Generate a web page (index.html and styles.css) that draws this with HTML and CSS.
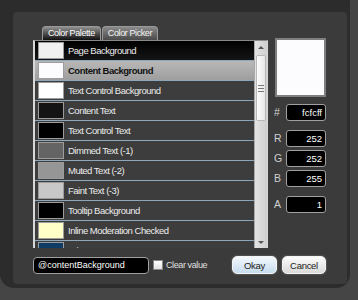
FILE: index.html
```html
<!DOCTYPE html>
<html lang="en">
<head>
    <meta charset="UTF-8">
    <title>Color Picker</title>
    <link rel="stylesheet" href="styles.css">
</head>
<body>

    <div class="frame">
        <div class="dialog">
            <div class="main">
                <!-- palette list -->
                <div class="palette">
                    <div class="tabs">
                        <span class="tab active">Color Palette</span>
                        <span class="tab">Color Picker</span>
                    </div>
                    <div class="listbox">
                        <ul class="colors">
                            <li class="dark"><span class="swatch" style="background: #f0f0f0;"></span>Page Background</li>
                            <li class="selected"><span class="swatch" style="background: #fcfcff;"></span>Content Background</li>
                            <li><span class="swatch" style="background: #ffffff;"></span>Text Control Background</li>
                            <li><span class="swatch" style="background: #141414;"></span>Content Text</li>
                            <li><span class="swatch" style="background: #000000;"></span>Text Control Text</li>
                            <li><span class="swatch" style="background: #646464;"></span>Dimmed Text (-1)</li>
                            <li><span class="swatch" style="background: #969696;"></span>Muted Text (-2)</li>
                            <li><span class="swatch" style="background: #c8c8c8;"></span>Faint Text (-3)</li>
                            <li><span class="swatch" style="background: #000000;"></span>Tooltip Background</li>
                            <li><span class="swatch" style="background: #ffffc8;"></span>Inline Moderation Checked</li>
                            <li><span class="swatch" style="background: #0f3c64;"></span>Primary Content</li>
                        </ul>
                        <div class="scrollbar">
                            <span class="arrow up"></span>
                            <span class="thumb"><i></i><i></i><i></i></span>
                            <span class="arrow down"></span>
                        </div>
                    </div>
                </div>

                <!-- picker values -->
                <div class="picker">
                    <div class="preview"></div>
                    <div class="field hex"><label>#</label><span class="box">fcfcff</span></div>
                    <div class="field"><label>R</label><span class="box">252</span></div>
                    <div class="field"><label>G</label><span class="box">252</span></div>
                    <div class="field last"><label>B</label><span class="box">255</span></div>
                    <div class="field"><label>A</label><span class="box">1</span></div>
                </div>
            </div>

            <div class="actions">
                <input type="text" class="varname" value="@contentBackground">
                <label class="clear"><span class="check"></span>Clear value</label>
                <button type="button" class="button okay">Okay</button>
                <button type="button" class="button cancel">Cancel</button>
            </div>
        </div>
    </div>

</body>
</html>
```

FILE: styles.css
```css
body {
    margin: 0;
    width: 358px;
    height: 300px;
    overflow: hidden;
    background: #454545;
    font-family: "Liberation Sans", Arial, sans-serif;
    font-size: 9px;
}

.frame {
    width: 350px;
    height: 288px;
    padding: 12px 0 0 13px;
    box-sizing: border-box;
    background: #2c2c2c;
    border-radius: 0 0 14px 14px;
}

.dialog {
    width: 334px;
    height: 272px;
    padding: 14px 21px 0 20px;
    box-sizing: border-box;
    background: #3b3b3b;
    border-radius: 4px;
}

.main {
    display: flex;
    gap: 6px;
}

.palette {
    width: 235px;
}

/* tabs */
.tabs {
    display: flex;
    gap: 1px;
    padding-left: 9px;
    height: 14px;
}

.tab {
    height: 14px;
    padding: 0 5px;
    box-sizing: border-box;
    border: 1px solid #9a9a9a;
    border-bottom: none;
    border-radius: 4px 4px 0 0;
    background: linear-gradient(#8a8a8a, #4a4a4a);
    color: #f4f4f4;
    letter-spacing: -0.4px;
    line-height: 13px;
}

.tab.active {
    background: linear-gradient(#909090, #101010);
    color: #fff;
}

/* list */
.listbox {
    display: flex;
    height: 208px;
    border-top: 1px solid #8a8a8a;
    border-left: 2px solid #d8d8d8;
    border-right: 1px solid #d8d8d8;
    box-sizing: border-box;
    overflow: hidden;
}

.colors {
    flex: 1;
    list-style: none;
    margin: 0;
    padding: 0;
}

.colors li {
    display: flex;
    align-items: center;
    height: 19px;
    border-bottom: 1px solid #8ea6ba;
    background: #3d3d3d;
    color: #ececec;
    font-size: 9.5px;
    letter-spacing: -0.5px;
    white-space: nowrap;
}

.colors li.dark {
    background: linear-gradient(#000, #151515);
}

.colors li.selected {
    background: linear-gradient(#b8b8b8, #9e9e9e);
    color: #111;
    font-weight: bold;
}

.swatch {
    width: 26px;
    height: 17px;
    margin: 0 4px 0 3px;
    box-sizing: border-box;
    border: 1px solid #9c9c9c;
    flex-shrink: 0;
}

.scrollbar {
    display: flex;
    flex-direction: column;
    align-items: center;
    width: 12px;
    border-left: 1px solid #a8a8a8;
    background: linear-gradient(to right, #e4e4e4, #cfcfcf);
}

.arrow {
    width: 0;
    height: 0;
    border-left: 3px solid transparent;
    border-right: 3px solid transparent;
}

.arrow.up {
    margin-top: 5px;
    border-bottom: 3px solid #555;
}

.arrow.down {
    margin-top: auto;
    margin-bottom: 4px;
    border-top: 3px solid #555;
}

.thumb {
    display: flex;
    flex-direction: column;
    justify-content: center;
    align-items: center;
    gap: 2px;
    width: 10px;
    height: 66px;
    margin-top: 6px;
    box-sizing: border-box;
    border: 1px solid #b8b8b8;
    border-radius: 2px;
    background: linear-gradient(to right, #fdfdfd, #e6e6e6);
}

.thumb i {
    width: 6px;
    height: 1px;
    background: #777;
}

/* picker */
.picker {
    display: flex;
    flex-direction: column;
    width: 52px;
}

.preview {
    width: 51px;
    height: 59px;
    margin: 12px 0 7px 1px;
    box-sizing: border-box;
    border: 2px solid #7f7f7f;
    background: #fcfcff;
}

.field {
    display: flex;
    justify-content: space-between;
    height: 17px;
    margin-bottom: 3px;
}

.field.hex,
.field.last {
    margin-bottom: 9px;
}

.field label {
    padding-top: 2px;
    color: #d0d0d0;
    font-size: 10.5px;
}

.box {
    width: 40px;
    height: 17px;
    padding-right: 3px;
    box-sizing: border-box;
    border: 1px solid #a0a0a0;
    border-radius: 3px;
    background: #000;
    color: #fff;
    text-align: right;
    font-size: 9.5px;
    line-height: 15px;
}

/* bottom row */
.actions {
    display: flex;
    align-items: center;
    margin-top: 8px;
}

.varname {
    width: 116px;
    height: 17px;
    margin: 0 4px 0 0;
    padding: 0 0 0 4px;
    box-sizing: border-box;
    border: 1px solid #a0a0a0;
    border-radius: 4px;
    background: #000;
    color: #fff;
    font-family: inherit;
    font-size: 9px;
    outline: none;
}

.clear {
    display: flex;
    align-items: center;
    color: #e0e0e0;
    letter-spacing: -0.4px;
}

.check {
    width: 10px;
    height: 10px;
    margin-right: 3px;
    box-sizing: border-box;
    border: 1px solid #888;
    background: linear-gradient(#fff, #e2e2e2);
}

.button {
    height: 18px;
    padding: 0;
    border: 1px solid #f4f4f4;
    border-radius: 5px;
    color: #222;
    font-family: inherit;
    font-size: 9.5px;
    letter-spacing: -0.3px;
    box-shadow: 0 0 2px rgba(255, 255, 255, 0.4);
}

.okay {
    width: 45px;
    margin-left: auto;
    background: linear-gradient(#f4f8fc, #c6dcee);
}

.cancel {
    width: 44px;
    margin-left: 5px;
    background: linear-gradient(#fcfcfc, #dadada);
}
```
